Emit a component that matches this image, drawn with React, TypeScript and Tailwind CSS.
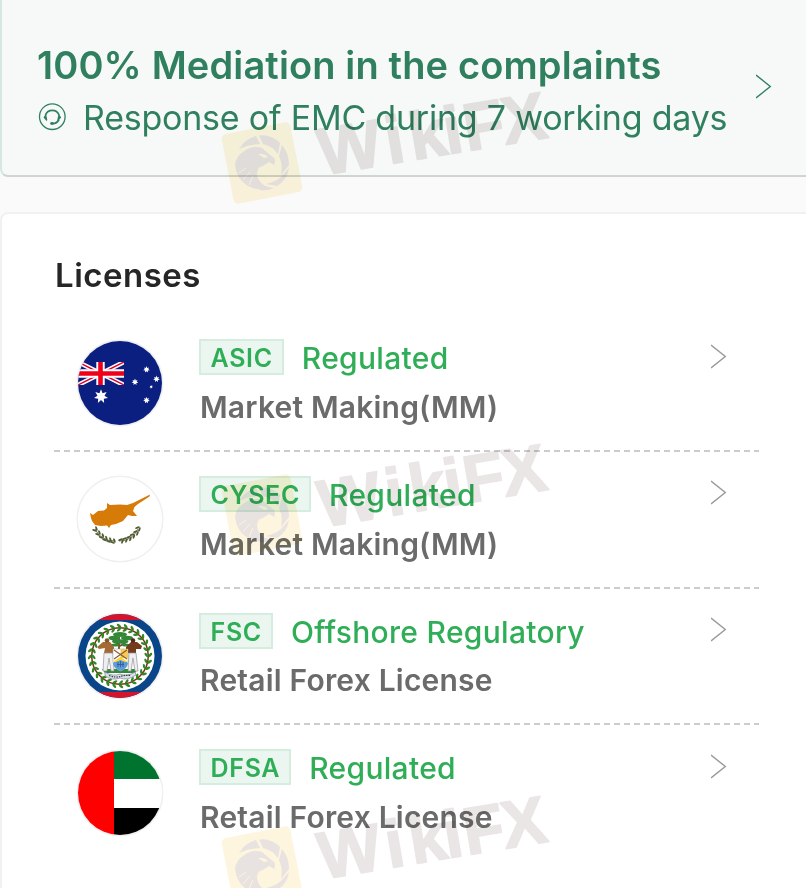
import React from 'react';

interface License {
  code: string;
  status: string;
  type: string;
  flag: React.ReactNode;
}

const Star: React.FC<{ x: number; y: number; r: number }> = ({ x, y, r }) => {
  const points = Array.from({ length: 14 }).map((_, i) => {
    const radius = i % 2 === 0 ? r : r * 0.5;
    const angle = (i * Math.PI) / 7 - Math.PI / 2;
    return `${x + radius * Math.cos(angle)},${y + radius * Math.sin(angle)}`;
  });
  return <polygon points={points.join(' ')} fill="#fff" />;
};

const AustraliaFlag = () => (
  <>
    <rect width="88" height="88" fill="#0b1f80" />
    <svg x="2" y="23" width="46" height="23" viewBox="0 0 46 23">
      <path d="M-2-1 48 24M48-1-2 24" stroke="#fff" strokeWidth="4.6" />
      <path d="M-2-1 23 11.5M48-1 23 11.5M-2 24 23 11.5M48 24 23 11.5" stroke="#e4002b" strokeWidth="1.4" />
      <path d="M22.5 0V23M0 11.5H46" stroke="#fff" strokeWidth="8.4" />
      <path d="M22.5 0V23M0 11.5H46" stroke="#f00018" strokeWidth="4.6" />
    </svg>
    <Star x={25} y={57.5} r={7.2} />
    <Star x={70.5} y={30.5} r={3.4} />
    <Star x={59} y={43} r={3.4} />
    <Star x={80.5} y={40} r={3.4} />
    <Star x={75.2} y={47.8} r={1.8} />
    <Star x={70.5} y={61.2} r={3.4} />
  </>
);

const CyprusFlag = () => (
  <>
    <rect width="88" height="88" fill="#fff" />
    <path
      d="M14 38 17 40 22 36 28 35.5 31 33V28L34 30 44 29.500 51 30 57 28 65 24 74 19.500 73.500 21.500 62 29 58.500 32 57 36 61 41 56 41 52 40 47 46 40 49 35 50 33 53 31 50.500 25 51 19 50 16 46 15 43Z"
      fill="#d77b08"
    />
    <path d="M19 54Q25 66 39 66M62 54Q56 66 43 66" fill="none" stroke="#4e5b31" strokeWidth=".8" />
    {[[19, 54], [22, 58], [25.5, 61], [29, 63.5], [33, 65], [37, 66], [45, 66], [49, 65], [53, 63.5], [56.500, 61], [60, 58], [62, 54]].map(([x, y], i) => (
      <g key={i} fill="#4e5b31">
        <ellipse cx={x} cy={y - 1.5} rx="2.4" ry="1" transform={`rotate(${i < 6 ? 70 : -20} ${x} ${y})`} />
        <ellipse cx={x} cy={y + 1.5} rx="2.4" ry="1" transform={`rotate(${i < 6 ? 20 : -70} ${x} ${y})`} />
      </g>
    ))}
  </>
);

const BelizeFlag = () => (
  <>
    <rect width="88" height="88" fill="#0a4489" />
    <rect width="88" height="8" fill="#d3142c" />
    <rect y="80" width="88" height="8" fill="#d3142c" />
    <circle cx="44" cy="44" r="34.5" fill="#fff" />
    <circle cx="44" cy="44" r="28.3" fill="none" stroke="#7d2f1c" strokeWidth="1.5" />
    {Array.from({ length: 28 }).map((_, i) => (
      <g key={i} transform={`rotate(${i * (360 / 28)} 44 44)`} fill="#2f8a26">
        <ellipse cx="43" cy="13.800" rx="2.700" ry="1.300" transform="rotate(40 43 13.800)" />
        <ellipse cx="43" cy="17.700" rx="2.500" ry="1.200" transform="rotate(-40 43 17.700)" />
      </g>
    ))}
    <path d="M43 40V25M44 34 37 28M44 34 52 29" stroke="#704b2a" strokeWidth="1.8" />
    <g fill="#338838">
      <ellipse cx="44" cy="22.500" rx="7" ry="2.500" />
      <ellipse cx="38" cy="26" rx="5.500" ry="2.300" />
      <ellipse cx="51" cy="26" rx="6" ry="2.300" />
      <ellipse cx="44" cy="29.500" rx="8" ry="2.300" />
      <ellipse cx="39" cy="33" rx="4" ry="1.500" />
      <ellipse cx="50" cy="33" rx="4" ry="1.500" />
      <path d="M26 57H62L59 61H29Z" />
    </g>
    <path d="M27 30 21 35 23 37 29 36 28 41H38V35L34 30Z" fill="#a56a33" />
    <path d="M55 30 50 35V41H60V37L65 37 66 34 61 30Z" fill="#743a1d" />
    <circle cx="31" cy="28.500" r="2.300" fill="#8b5428" />
    <circle cx="57" cy="28.500" r="2.300" fill="#54281a" />
    <path d="M28 41H37L38 59H35L33 46 31 59H27ZM53 41H60L62 59H59L57 46 55 59H52Z" fill="#f0eff0" stroke="#92929b" strokeWidth=".7" />
    <path d="M37 37H52V50Q51 57 44.500 59Q38 57 37 50Z" fill="#fff" stroke="#999" strokeWidth=".5" />
    <path d="M44.500 37H52V46H44.500Z" fill="#f5c95c" />
    <path d="M38 38 51 47M51 38 38 47" stroke="#8c5a31" strokeWidth="1.1" />
    <path d="M37 51 44.500 45 52 51Q51 57 44.500 59Q38 57 37 51Z" fill="#5b9bd8" />
    <path d="M37 50 44.500 45 52 50 49 50 44.500 48 40 50Z" fill="#ffd52e" />
    <path d="M41 52.500H48M42 50V55M44.500 49V55M47 50V55" stroke="#315a9a" strokeWidth=".9" />
    <path d="M29 60Q37 65 44 62Q51 65 59 60L60 63Q51 69 44 66Q37 69 29 64Z" fill="#dcdfe8" stroke="#6c7286" strokeWidth=".6" />
    <path d="M33 63.500Q40 66 44 64.500T55 63.500" fill="none" stroke="#333b50" strokeWidth="1.2" strokeDasharray="1.5 1" />
  </>
);

const UaeFlag = () => (
  <>
    <rect width="88" height="88" fill="#fff" />
    <rect x="38" width="50" height="30" fill="#00732f" />
    <rect x="38" y="59" width="50" height="29" fill="#000" />
    <rect width="38" height="88" fill="#f00" />
  </>
);

const licenses: License[] = [
  { code: 'ASIC', status: 'Regulated', type: 'Market Making(MM)', flag: <AustraliaFlag /> },
  { code: 'CYSEC', status: 'Regulated', type: 'Market Making(MM)', flag: <CyprusFlag /> },
  { code: 'FSC', status: 'Offshore Regulatory', type: 'Retail Forex License', flag: <BelizeFlag /> },
  { code: 'DFSA', status: 'Regulated', type: 'Retail Forex License', flag: <UaeFlag /> },
];

const Flag: React.FC<{ id: string; children: React.ReactNode }> = ({ id, children }) => (
  <svg className="w-[88px] h-[88px] -mt-[0.5px] shrink-0" viewBox="0 0 88 88">
    <clipPath id={id}>
      <circle cx="44" cy="44" r="42" />
    </clipPath>
    <circle cx="44" cy="44" r="42.5" fill="none" stroke="#f0f0f2" strokeWidth="2" />
    <g clipPath={`url(#${id})`}>{children}</g>
  </svg>
);

const Chevron: React.FC<{ className: string }> = ({ className }) => (
  <svg className={className} width="16" height="26" viewBox="0 0 16 26" fill="none" stroke="currentColor" strokeWidth="1.4">
    <path d="M0 2 14.300 13.500 0 25" />
  </svg>
);

const SupportIcon = () => (
  <svg className="w-7 h-7 shrink-0" viewBox="0 0 28 28" fill="none" stroke="currentColor" strokeWidth="1.3">
    <circle cx="14.300" cy="13.700" r="12.800" />
    <path d="M7.500 12A7.200 7.200 0 0 1 21 12M21 16.500Q19 20.500 14.500 20.700" strokeWidth="1.700" />
    <path d="M8 10.500 5.500 14.500 8.500 18 9.300 17ZM20.600 10.500 23.200 14.500 20 18 19.300 17Z" fill="currentColor" stroke="none" />
    <ellipse cx="14" cy="20.500" rx="1.900" ry="1.400" fill="currentColor" stroke="none" />
  </svg>
);

const Watermark = () => (
  <svg className="block w-[380px] h-[130px] overflow-visible" viewBox="0 0 380 130">
    <g transform="translate(52 83)">
      <rect x="-35" y="-35.5" width="70" height="71" rx="5" fill="#fdf5dd" transform="rotate(-11)" />
      <g fill="#e8e2e1">
        <path d="M-27 2Q-26-7-19-11Q-10-18 0-15L7-9 12-5Q14-2 12 2L7-1 1 3Q-5 4-5 10Q-5 18 3 23L10 25Q-3 29-14 23Q-25 17-27 2Z" />
        <path d="M-23-14Q-17-24-6-27L-2-19Q-13-19-23-14Z" />
        <path d="M-3-27.5Q9-29 18-20L16-9Q10-17 1-19Z" />
        <path d="M20-18Q27-10 27 2L19 12Q21 1 17-7Z" />
        <path d="M27 5Q25 17 15 23L4 21Q15 18 19 14Z" />
        <path d="M12 25Q5 28-2 27L-8 18Q0 24 12 25Z" />
      </g>
      <path d="M-4-9Q2-10 6-6L2-5Z" fill="#fdf5dd" />
      <path d="M-23 10-16 5M-19 17-12 9M-13 22-9 13" stroke="#fdf5dd" strokeWidth="1" />
    </g>
    <text
      x="0 68 92 127 147 186"
      transform="translate(112 95.500) rotate(-9.500)"
      className="font-['Liberation_Sans',sans-serif] font-bold text-[67px]"
      fill="#eae6e5"
      stroke="#eae6e5"
      strokeWidth="1.5"
      strokeLinejoin="round"
    >
      WikiFX
    </text>
  </svg>
);

export default function App() {
  return (
    <div className="relative w-[806px] h-[888px] overflow-hidden bg-[#fafafa] font-['Inter',sans-serif]">
      <section className="flex items-start justify-between h-[177px] w-[820px] pl-9 pr-12 pt-10 bg-[#f6f9f8] border-l-2 border-b-2 border-l-[#d6e7e1] border-b-[#ced5d2] rounded-bl-lg text-[#30805f]">
        <div>
          <h1 className="-ml-px text-[38px] leading-[50px] font-semibold tracking-[0.14px] whitespace-nowrap">100% Mediation in the complaints</h1>
          <div className="flex items-center gap-[17px] h-[54px]">
            <SupportIcon />
            <span className="pt-0.5 text-[34px] leading-[54px] tracking-[-0.22px] whitespace-nowrap">Response of EMC during 7 working days</span>
          </div>
        </div>
        <Chevron className="mt-[33px]" />
      </section>

      <section className="mt-[35px] h-[700px] w-[820px] bg-white border-2 border-[#f1f1f1] rounded-tl-lg pl-[52px] pt-[37px]">
        <h2 className="pl-px text-[33px] leading-[48px] font-semibold tracking-[0.5px] text-[#262626]">Licenses</h2>
        <div className="mt-[16.33px] w-[705px]">
          {licenses.map((item, index) => (
            <div key={item.code} className="flex flex-col h-[136.67px]">
              <div className="flex flex-1 pl-[22px] pr-8 pt-6">
                <Flag id={`flag-${item.code}`}>{item.flag}</Flag>
                <div className="ml-[35px] flex-1">
                  <div className="flex items-center gap-[18px] h-9">
                    <span className="h-9 pl-[9.5px] pr-[9px] border-2 border-[#d5eddf] bg-[#eaf6ef] text-[25px] leading-[34px] font-semibold tracking-[0.7px] text-[#2fae57]">{item.code}</span>
                    <span className="pt-0.5 text-[30px] leading-[38px] font-medium tracking-[0.3px] whitespace-nowrap text-[#2fae57]">{item.status}</span>
                  </div>
                  <p className="mt-[11.6px] pl-px text-[30px] leading-10 font-semibold tracking-[0.2px] whitespace-nowrap text-[#6b6b6b]">{item.type}</p>
                </div>
                <Chevron className="mt-[3.5px] text-[#999]" />
              </div>
              {index < licenses.length - 1 && (
                <div className="h-0.5 bg-[repeating-linear-gradient(90deg,#ccc_0,#ccc_6px,transparent_6px,transparent_10px)]" />
              )}
            </div>
          ))}
        </div>
      </section>

      <div className="absolute left-[210px] top-20 flex flex-col gap-[222px] pointer-events-none mix-blend-multiply">
        <Watermark />
        <Watermark />
        <Watermark />
      </div>
    </div>
  );
}
